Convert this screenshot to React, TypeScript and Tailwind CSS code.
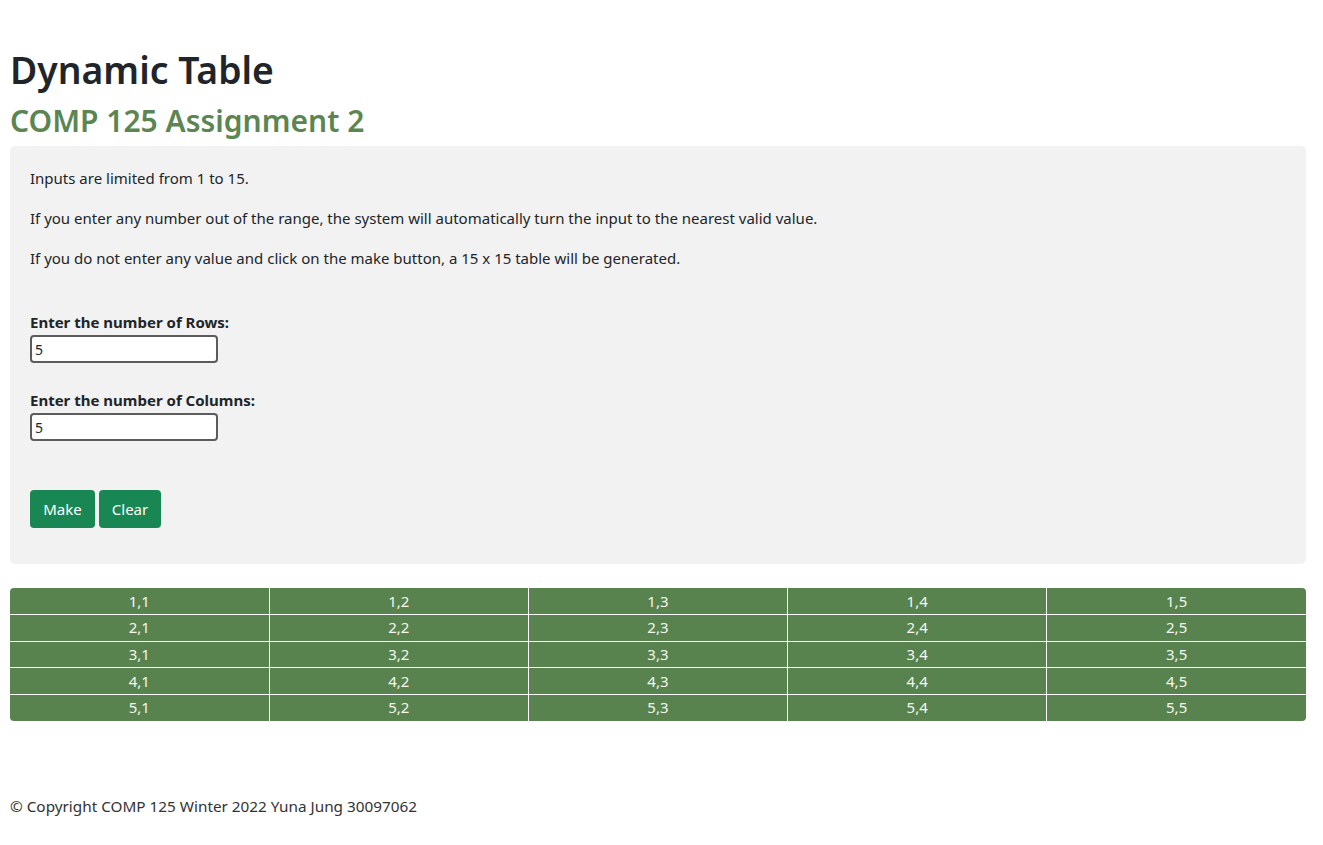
import React, { useState } from "react";

const font = { fontFamily: '"Noto Sans", "Open Sans", sans-serif' };

export default function App() {
  const [rows, setRows] = useState("5");
  const [cols, setCols] = useState("5");
  const [size, setSize] = useState({ r: 5, c: 5 });

  const clamp = (v: string) => {
    const n = parseInt(v, 10);
    if (isNaN(n)) return 15;
    return Math.min(15, Math.max(1, n));
  };

  const make = () => {
    const r = clamp(rows);
    const c = clamp(cols);
    setRows(String(r));
    setCols(String(c));
    setSize({ r, c });
  };

  return (
    <div
      className="min-h-screen bg-white pl-[10px] pr-[17px] pt-[46px] text-[#212529]"
      style={font}
    >
      {/* Header */}
      <h1 className="text-[37.3px] leading-[48px] font-semibold text-[#212529]">
        Dynamic Table
      </h1>
      <h2 className="mt-[8px] text-[30px] leading-[38px] font-semibold text-[#5b8651]">
        COMP 125 Assignment 2
      </h2>

      {/* Form panel */}
      <div className="mt-[6px] rounded-[5px] bg-[#f2f2f2] px-[20px] pt-[20px] pb-[36px] text-[15px]">
        <p className="leading-[24px] mb-[16px]">Inputs are limited from 1 to 15.</p>
        <p className="leading-[24px] mb-[16px]">
          If you enter any number out of the range, the system will automatically turn the input to the nearest valid value.
        </p>
        <p className="leading-[24px]">
          If you do not enter any value and click on the make button, a 15 x 15 table will be generated.
        </p>

        <div className="mt-[40px] flex flex-col">
          <label className="font-bold leading-[24px]">Enter the number of Rows:</label>
          <input
            value={rows}
            onChange={(e) => setRows(e.target.value)}
            className="mt-[1px] h-[28px] w-[188px] rounded-[4px] border-2 border-[#5c5c5c] bg-white px-[3px] text-[14px] outline-none"
          />
          <label className="mt-[25px] font-bold leading-[24px]">Enter the number of Columns:</label>
          <input
            value={cols}
            onChange={(e) => setCols(e.target.value)}
            className="mt-[1px] h-[28px] w-[188px] rounded-[4px] border-2 border-[#5c5c5c] bg-white px-[3px] text-[14px] outline-none"
          />
        </div>

        <div className="mt-[49px] flex gap-[4px]">
          <button
            onClick={make}
            className="h-[38px] w-[65px] rounded-[4px] bg-[#198754] text-[15px] text-white"
          >
            Make
          </button>
          <button
            onClick={() => {
              setRows("");
              setCols("");
              setSize({ r: 0, c: 0 });
            }}
            className="h-[38px] w-[62px] rounded-[4px] bg-[#198754] text-[15px] text-white"
          >
            Clear
          </button>
        </div>
      </div>

      {/* Generated table */}
      <div className="mt-[24px] h-[133px] overflow-hidden rounded-[4px] bg-[#58834e]">
        {size.r > 0 && (
          <table className="w-full h-full border-collapse table-fixed text-[15px] text-[#f4f8ee]">
            <tbody>
              {Array.from({ length: size.r }).map((_, i) => (
                <tr key={i}>
                  {Array.from({ length: size.c }).map((_, j) => (
                    <td
                      key={j}
                      className="h-[26.6px] border border-white p-0 text-center leading-none first:border-l-0 last:border-r-0 [tr:first-child_&]:border-t-0 [tr:last-child_&]:border-b-0"
                    >
                      {i + 1},{j + 1}
                    </td>
                  ))}
                </tr>
              ))}
            </tbody>
          </table>
        )}
      </div>

      {/* Footer */}
      <footer className="mt-[73px] text-[15.3px] leading-[24px] text-[#333]">
        © Copyright COMP 125 Winter 2022 Yuna Jung 30097062
      </footer>
    </div>
  );
}
